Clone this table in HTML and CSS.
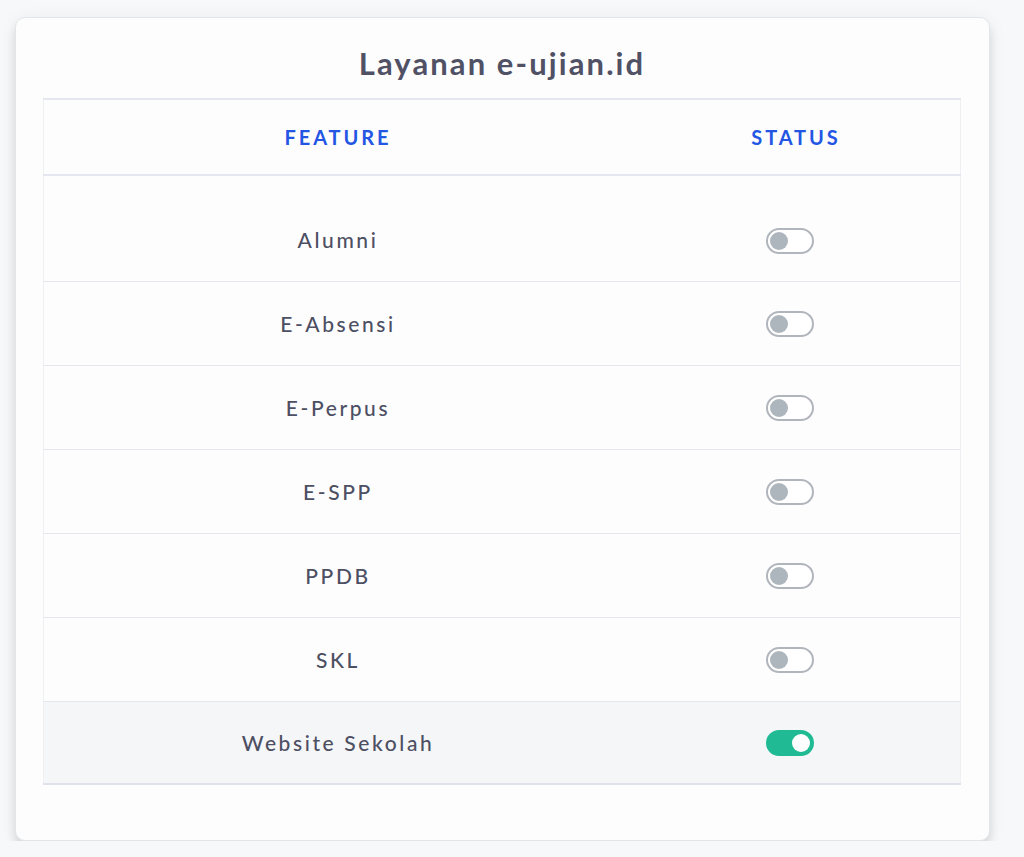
FILE: index.html
```html
<!DOCTYPE html>
<html lang="id">
<head>
<meta charset="utf-8">
<title>Layanan e-ujian.id</title>
<link rel="stylesheet" href="styles.css">
</head>
<body>
<div class="card">
  <h1 class="title">Layanan e-ujian.id</h1>
  <table class="features">
    <thead>
      <tr><th class="col-feature">FEATURE</th><th class="col-status">STATUS</th></tr>
    </thead>
    <tbody>
      <tr class="first"><td>Alumni</td><td><span class="switch"></span></td></tr>
      <tr><td>E-Absensi</td><td><span class="switch"></span></td></tr>
      <tr><td>E-Perpus</td><td><span class="switch"></span></td></tr>
      <tr><td>E-SPP</td><td><span class="switch"></span></td></tr>
      <tr><td>PPDB</td><td><span class="switch"></span></td></tr>
      <tr><td>SKL</td><td><span class="switch"></span></td></tr>
      <tr class="active"><td>Website Sekolah</td><td><span class="switch on"></span></td></tr>
    </tbody>
  </table>
</div>
</body>
</html>
```

FILE: styles.css
```css
html, body {
  margin: 0;
  padding: 0;
  background: #f7f8fa;
  font-family: "Lato", "Open Sans", sans-serif;
}

.card {
  box-sizing: border-box;
  margin: 17px 0 0 15px;
  width: 975px;
  height: 824px;
  background: #fdfdfe;
  border: 1px solid #e2e5ea;
  border-radius: 10px;
  box-shadow: 0 8px 10px rgba(0, 0, 0, 0.11), 0 2px 18px rgba(0, 0, 0, 0.06);
  padding: 27px 28px 0 27px;
}

.title {
  margin: 0 0 17px;
  text-align: center;
  font-size: 31px;
  line-height: 36px;
  font-weight: 700;
  color: #505165;
  letter-spacing: 2.1px;
}

.features {
  width: 918px;
  border-collapse: collapse;
  border-left: 1px solid #eef0f4;
  border-right: 1px solid #eef0f4;
}

.features th {
  height: 74px;
  padding: 0;
  font-size: 20px;
  font-weight: 700;
  color: #2256e3;
  letter-spacing: 2.9px;
  text-align: center;
  border-top: 2px solid #e4e8ee;
  border-bottom: 2px solid #e4e8ee;
}

.col-feature { width: 588px; }

.features td {
  height: 83px;
  padding: 0;
  text-align: center;
  font-size: 21px;
  font-weight: 500;
  color: #4d4f63;
  letter-spacing: 2.6px;
  border-bottom: 1px solid #e4e8ee;
  vertical-align: middle;
}

.features tr.first td {
  height: 106px;
  padding-top: 23px;
  box-sizing: border-box;
}

.features tr.active td {
  height: 81px;
  background: #f5f6f8;
  border-bottom: 2px solid #dfe3ec;
}

.switch {
  display: inline-block;
  position: relative;
  box-sizing: border-box;
  width: 48px;
  height: 26px;
  border: 2px solid #b1b6bd;
  border-radius: 13px;
  background: #ffffff;
  vertical-align: middle;
  margin-right: 12px;
}

.switch::after {
  content: "";
  position: absolute;
  left: 2px;
  top: 2px;
  width: 18px;
  height: 18px;
  border-radius: 50%;
  background: #adb5bd;
}

.switch.on {
  background: #20bb94;
  border-color: #20bb94;
}

.switch.on::after {
  left: auto;
  right: 2px;
  background: #ffffff;
}
```
